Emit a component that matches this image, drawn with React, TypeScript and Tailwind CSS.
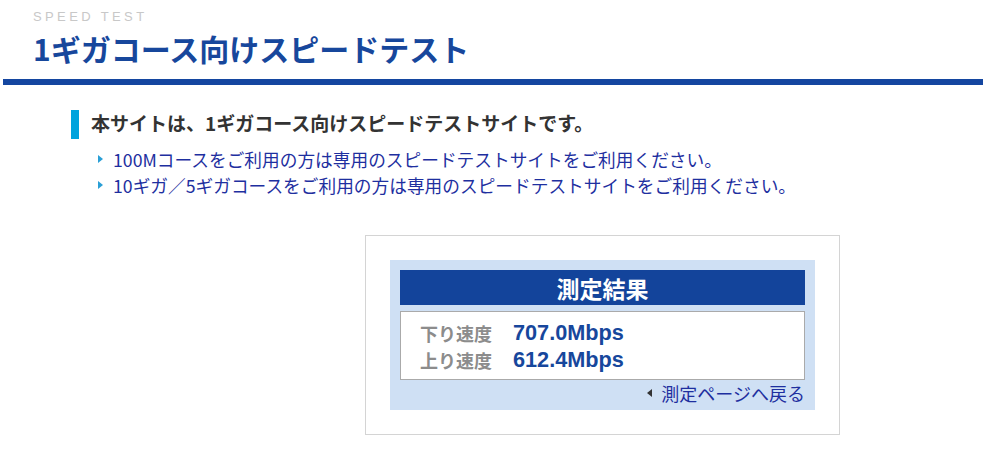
export default function App() {
    const jp = { fontFamily: '"Noto Sans CJK JP", "Noto Sans", sans-serif' };

    return (
        <div className="w-[983px] h-[467px] bg-white overflow-hidden" style={jp}>
            {/* Page header */}
            <div className="pl-[33px] pt-[9px]">
                <div className="text-[13px] leading-[16px] tracking-[0.26em] text-[#c8c8c8]" style={{ fontFamily: '"Liberation Sans", Arial, sans-serif' }}>
                    SPEED TEST
                </div>
                <h1 className="mt-[5px] text-[30px] leading-[36px] font-bold text-[#17479c]">
                    1ギガコース向けスピードテスト
                </h1>
            </div>
            <div className="ml-[3px] mt-[13px] h-[6px] bg-[#1446a0]" />

            {/* Notice */}
            <div className="ml-[71px] mt-[25px]">
                <div className="flex items-center border-l-[8px] border-[#00a3dd] h-[29px] pl-[12px]">
                    <p className="text-[19px] font-bold text-[#333333] leading-[24px] -mt-[3px]">
                        本サイトは、1ギガコース向けスピードテストサイトです。
                    </p>
                </div>
                <ul className="mt-[7px] pl-[27px] text-[17.7px] leading-[26px] text-[#1e2f9f]">
                    {[
                        '100Mコースをご利用の方は専用のスピードテストサイトをご利用ください。',
                        '10ギガ／5ギガコースをご利用の方は専用のスピードテストサイトをご利用ください。',
                    ].map(t => (
                        <li key={t} className="flex items-center">
                            <span className="mr-[10px] w-0 h-0 border-y-[4px] border-y-transparent border-l-[5px] border-l-[#2a9fd6]" />
                            {t}
                        </li>
                    ))}
                </ul>
            </div>

            {/* Result box */}
            <div className="ml-[365px] mt-[37px] w-[475px] h-[200px] border border-[#d4d4d4] p-[24px]">
                <div className="bg-[#cfe0f4] px-[10px] pt-[10px] pb-[4px]">
                    <div className="h-[35px] bg-[#13449b] flex items-center justify-center text-white text-[23px] leading-[30px] font-bold">
                        測定結果
                    </div>
                    <div className="mt-[6px] h-[69px] bg-white border border-[#aaaaaa] pl-[19px] pt-[7px]">
                        {[
                            ['下り速度', '707.0Mbps'],
                            ['上り速度', '612.4Mbps'],
                        ].map(([label, value]) => (
                            <div key={label} className="flex items-center h-[27px]">
                                <span className="w-[93px] text-[18px] leading-[26px] font-bold text-[#8c8c8c]">{label}</span>
                                <span className="text-[21.7px] leading-[26px] font-bold text-[#17479c]" style={{ fontFamily: '"Liberation Sans", Arial, sans-serif' }}>{value}</span>
                            </div>
                        ))}
                    </div>
                    <div className="flex items-center justify-end h-[26px] text-[18px] leading-[24px] text-[#1e2f9f]">
                        <span className="mr-[9px] w-0 h-0 border-y-[4px] border-y-transparent border-r-[5px] border-r-[#333333]" />
                        測定ページへ戻る
                    </div>
                </div>
            </div>
        </div>
    );
}
